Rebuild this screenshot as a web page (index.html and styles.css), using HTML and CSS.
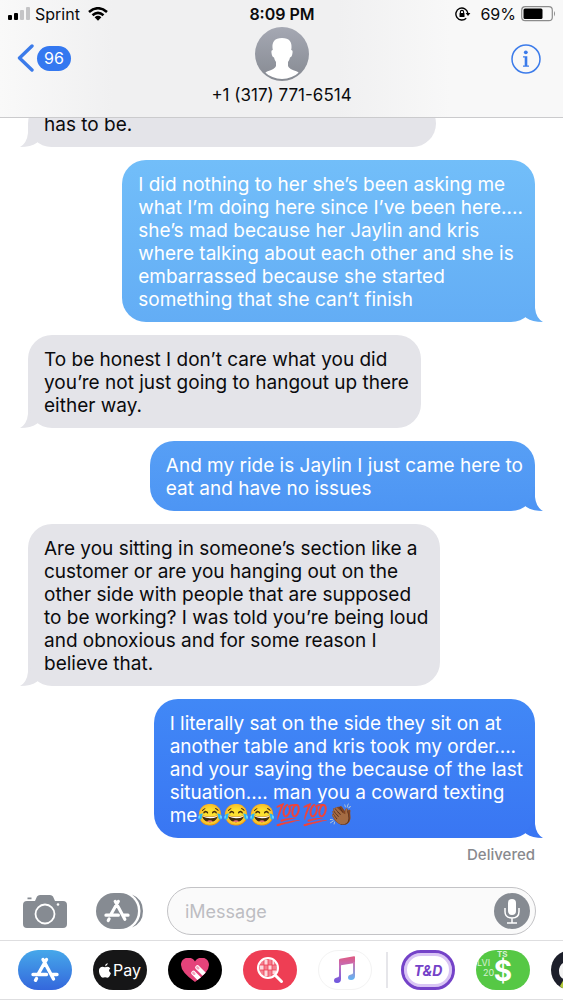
FILE: index.html
```html
<!DOCTYPE html>
<html lang="en">
<head>
    <meta charset="UTF-8">
    <meta name="viewport" content="width=device-width, initial-scale=1.0">
    <title>Messages</title>
    <link rel="stylesheet" href="styles.css">
</head>
<body>
    <!-- Shared shapes -->
    <svg class="defs" width="0" height="0" aria-hidden="true">
        <symbol id="tail" viewBox="0 0 32 24">
            <path d="M24 0V10Q25 20 32 24Q21 24 15.500 20L13.500 18.500A24 24 0 0 0 23 0Z"/>
        </symbol>
        <symbol id="appstore" viewBox="0 0 28 26">
            <g fill="none" stroke="currentColor" stroke-width="3.400" stroke-linecap="round">
                <path d="M15.500 2.500L7.500 16.500M12 2.500L22.500 22M2 17.500H15.500M21 17.500H26M5.500 21.500L4.500 23.300"/>
            </g>
        </symbol>
    </svg>

    <header class="header">
        <div class="status">
            <div class="status-left">
                <svg width="22" height="14" viewBox="0 0 22 14">
                    <rect x="0" y="8" width="4" height="5" rx="1"/>
                    <rect x="6" y="6" width="4" height="7" rx="1"/>
                    <rect x="12" y="3" width="4" height="10" rx="1" fill="#c4c4c6"/>
                    <rect x="18" y="0" width="4" height="13" rx="1" fill="#c4c4c6"/>
                </svg>
                <span>Sprint</span>
                <svg class="wifi" width="20" height="14" viewBox="0 0 20 14">
                    <g fill="none" stroke="#000" stroke-width="2.600">
                        <path d="M1 5Q10 -2.500 19 5"/>
                        <path d="M4.500 8.300Q10 3.600 15.500 8.300"/>
                    </g>
                    <path d="M6.600 10.200Q10 7.400 13.400 10.200L10 13.800Z"/>
                </svg>
            </div>
            <div class="status-time">8:09 PM</div>
            <div class="status-right">
                <svg class="lock" width="16" height="14" viewBox="0 0 16 14">
                    <path d="M12.800 6A6 6 0 1 0 11.200 11.200" fill="none" stroke="#000" stroke-width="1.400"/>
                    <path d="M10.600 6H15.400L13 9Z"/>
                    <rect x="4.500" y="6" width="5" height="4" rx=".5"/>
                    <path d="M5.400 6V5a1.600 1.600 0 0 1 3.200 0V6" fill="none" stroke="#000" stroke-width="1.100"/>
                </svg>
                <span>69%</span>
                <svg width="35" height="16" viewBox="0 0 35 16">
                    <rect x=".7" y=".7" width="30.600" height="14" rx="3.500" fill="none" stroke="#8c8c8c" stroke-width="1.200"/>
                    <rect x="2.500" y="2.500" width="19" height="10.500" rx="1.500"/>
                    <path d="M33 5Q35 7.700 33 10.400Z" fill="#8c8c8c"/>
                </svg>
            </div>
        </div>
        <div class="nav">
            <a class="back" href="#" aria-label="Back, 96 unread">
                <svg width="17" height="28" viewBox="0 0 17 28">
                    <path d="M15 2L2.500 14L15 26" fill="none" stroke="#3b7bea" stroke-width="3.400" stroke-linecap="round" stroke-linejoin="round"/>
                </svg>
                <span class="badge">96</span>
            </a>
            <div class="contact">
                <svg width="54" height="54" viewBox="0 0 54 54">
                    <defs>
                        <linearGradient id="avatar" x2="0" y2="1">
                            <stop offset="0" stop-color="#a5a8b3"/>
                            <stop offset="1" stop-color="#868a92"/>
                        </linearGradient>
                        <clipPath id="face"><circle cx="27" cy="27" r="25"/></clipPath>
                    </defs>
                    <circle cx="27" cy="27" r="27" fill="url(#avatar)"/>
                    <path clip-path="url(#face)" fill="#fff" d="M27 11C19.500 11 17 15 17.500 21L17.800 23Q16 23 16.500 26Q17 30 19 30.500Q19.500 33 21 35V39Q20 42 12 44.500Q9 46 7 52H47Q45 46 42 44.500Q34 42 33 39V35Q34.500 33 35 30.500Q37 30 37.500 26Q38 23 36.200 23L36.500 21C37 15 34.500 11 27 11Z"/>
                </svg>
                <span>+1 (317) 771-6514</span>
            </div>
            <button class="info" type="button" aria-label="Details">
                <svg width="30" height="30" viewBox="0 0 30 30">
                    <circle cx="15" cy="15" r="14" fill="none" stroke="#3b7bea" stroke-width="1.500"/>
                    <circle cx="14.800" cy="8.300" r="1.900" fill="#3b7bea"/>
                    <path d="M12 12.300H16.300V21.500H18V22.700H12V21.500H13.700V13.500H12Z" fill="#3b7bea"/>
                </svg>
            </button>
        </div>
    </header>

    <main class="chat">
        <div class="bubble received cut">has to be.<svg class="tail"><use href="#tail"/></svg></div>
        <div class="bubble sent blue-1">I did nothing to her she’s been asking me<br>what I’m doing here since I’ve been here....<br>she’s mad because her Jaylin and kris<br>where talking about each other and she is<br>embarrassed because she started<br>something that she can’t finish<svg class="tail"><use href="#tail"/></svg></div>
        <div class="bubble received">To be honest I don’t care what you did<br>you’re not just going to hangout up there<br>either way.<svg class="tail"><use href="#tail"/></svg></div>
        <div class="bubble sent blue-2">And my ride is Jaylin I just came here to<br>eat and have no issues<svg class="tail"><use href="#tail"/></svg></div>
        <div class="bubble received">Are you sitting in someone’s section like a<br>customer or are you hanging out on the<br>other side with people that are supposed<br>to be working? I was told you’re being loud<br>and obnoxious and for some reason I<br>believe that.<svg class="tail"><use href="#tail"/></svg></div>
        <div class="bubble sent blue-3">I literally sat on the side they sit on at<br>another table and kris took my order....<br>and your saying the because of the last<br>situation.... man you a coward texting<br>me<span class="emoji">😂😂😂💯💯👏🏾</span><svg class="tail"><use href="#tail"/></svg></div>
        <div class="delivered">Delivered</div>
    </main>

    <form class="compose" onsubmit="return false;">
        <button type="button" aria-label="Camera">
            <svg width="44" height="34" viewBox="0 0 44 34">
                <path fill="#868b92" d="M4 7H12L14 2.500Q15 1 17 1H27Q29 1 30 2.500L32 7H40Q44 7 44 11V30Q44 34 40 34H4Q0 34 0 30V11Q0 7 4 7ZM4.500 3.500H8.500V5.300H4.500Z"/>
                <circle cx="22" cy="20" r="9.500" fill="none" stroke="#fff" stroke-width="1.800"/>
                <circle cx="35" cy="10.500" r="1.300" fill="#fff"/>
            </svg>
        </button>
        <button class="apps-toggle" type="button" aria-label="Apps">
            <svg width="48" height="36" viewBox="0 0 48 36">
                <path d="M36 1.500Q47 6 47 18T36 34.500Q44.500 28 44.500 18T36 1.500Z" fill="#868b92"/>
                <rect width="42" height="36" rx="18" fill="#868b92"/>
                <use href="#appstore" x="8" y="6" width="26" height="24" color="#fff"/>
            </svg>
        </button>
        <div class="field">
            <input type="text" placeholder="iMessage" aria-label="iMessage">
            <button type="button" aria-label="Record audio">
                <svg width="36" height="36" viewBox="0 0 36 36">
                    <circle cx="18" cy="18" r="18" fill="#868b92"/>
                    <rect x="14" y="6" width="8" height="16" rx="4" fill="#fff"/>
                    <path d="M11 15V18.500Q11 25 18 25T25 18.500V15M18 25V30M13 30H23" fill="none" stroke="#fff" stroke-width="1.500"/>
                </svg>
            </button>
        </div>
    </form>

    <nav class="drawer">
        <button class="app store" type="button" aria-label="App Store">
            <svg width="28" height="26"><use href="#appstore"/></svg>
        </button>
        <button class="app pay" type="button">
            <svg width="12" height="15" viewBox="0 0 12 15">
                <path fill="#fff" d="M8.700 0Q8.800 2.800 6 3.500Q6 .800 8.700 0ZM6 4.300Q9 3 11.300 5.200Q8.500 7.700 11.900 10.200Q9.900 15.600 7.500 14.600Q6 14 4.700 14.600Q2.500 15.500.7 11.500Q-1.400 5.600 2.200 4.100Q3.800 3.500 6 4.300Z"/>
            </svg>
            Pay
        </button>
        <button class="app heart" type="button" aria-label="Digital Touch">
            <svg width="28" height="24" viewBox="0 0 28 24">
                <clipPath id="heart"><path d="M14 24Q0 14 0 7C0 -1.500 11 -2.500 14 3.500C17 -2.500 28 -1.500 28 7Q28 14 14 24Z"/></clipPath>
                <g clip-path="url(#heart)">
                    <rect width="28" height="24" fill="#e5437a"/>
                    <path d="M16.500 9.500L26 19M12.500 15L22 24.500" stroke="#fff" stroke-width="4.500" stroke-linecap="round"/>
                    <path d="M16.300 9.300L17.300 10.300M12.300 14.800L13.300 15.800" stroke="#f3a3bd" stroke-width="2.400" stroke-linecap="round"/>
                </g>
            </svg>
        </button>
        <button class="app images" type="button" aria-label="#images">
            <svg width="28" height="28" viewBox="0 0 28 28">
                <circle cx="12" cy="12" r="10" fill="#f37f8e"/>
                <path d="M8 4H12V9H8ZM4 9H8V14H4ZM12 9H16V14H12ZM8 14H12V20H8ZM16 14H20V18H16ZM16 5H18V9H16Z" fill="#fff" opacity=".7"/>
                <path d="M8 3V21M12 2V22M16 3V21M2 9H22M2 14H22" stroke="#ee3e54" stroke-width=".8"/>
                <circle cx="12" cy="12" r="10" fill="none" stroke="#fff" stroke-width="2"/>
                <path d="M19.500 19.500L25.500 25.500" stroke="#fff" stroke-width="3" stroke-linecap="round"/>
            </svg>
        </button>
        <button class="app music" type="button" aria-label="Music">
            <svg width="24" height="28" viewBox="0 0 24 28">
                <defs>
                    <linearGradient id="note" x1="0" y1="0" x2="0" y2="1">
                        <stop offset="0" stop-color="#e0587e"/>
                        <stop offset=".4" stop-color="#c070c0"/>
                        <stop offset="1" stop-color="#6a55e0"/>
                    </linearGradient>
                    <linearGradient id="note2" x1="0" y1="0" x2="0" y2="1">
                        <stop offset="0" stop-color="#d472ae"/>
                        <stop offset="1" stop-color="#5fb4f5"/>
                    </linearGradient>
                </defs>
                <path fill="url(#note)" d="M6 4Q6 3 7 2.800L21 .2Q22 0 22 1V7L8 9.200V23Q8 27 4 27Q1 27 1 24.500Q1 22 4 21.500Q6 21.200 6 20Z"/>
                <path fill="url(#note2)" d="M20 6H22V20Q22 24 18 24Q15 24 15 21.500Q15 19 18 18.500Q20 18.200 20 17Z"/>
            </svg>
        </button>
        <span class="divider"></span>
        <button class="app td" type="button">T&amp;D</button>
        <button class="app cash" type="button">
            <span class="mark">
                <b>TS</b>
                <span>LVI</span>
                <span class="year">20</span>
            </span>
            $
        </button>
        <button class="app game" type="button" aria-label="Game">
            <svg width="54" height="40" viewBox="0 0 54 40">
                <path d="M20 10Q8 12 8 21T18 30V40H40V10Z" fill="#f4f4f4"/>
                <path d="M9 36L13 29L24 40H12Z" fill="#b4cc3a"/>
            </svg>
        </button>
    </nav>
</body>
</html>
```
FILE: styles.css
```css
* {
    box-sizing: border-box;
}
body {
    margin: 0;
    min-height: 100vh;
    display: flex;
    flex-direction: column;
    background-color: #fff;
    color: #0b0b0d;
    font-family: Inter, "Liberation Sans", sans-serif;
    overflow-x: hidden;
}
button {
    border: none;
    background: none;
    padding: 0;
    font-family: inherit;
    cursor: pointer;
}
svg {
    display: block;
    flex-shrink: 0;
}
.defs {
    position: absolute;
}

.header {
    position: relative;
    z-index: 1;
    height: 118px;
    border-bottom: 1px solid #cbcbcd;
    background: linear-gradient(to right, #f9f9f9, #f0f0f1 20%, #f0f0f1 60%, #f8f8f8 80%);
}
.status {
    display: grid;
    grid-template-columns: 1fr auto 1fr;
    align-items: center;
    height: 27px;
    padding: 0 7px 0 8px;
    font-size: 16px;
}
.status-left,
.status-right {
    display: flex;
    align-items: center;
    gap: 5px;
}
.status-right {
    justify-content: flex-end;
}
.wifi {
    margin-left: 3px;
}
.lock {
    margin-right: 4px;
}
.status-time {
    font-weight: 600;
}
.nav {
    display: grid;
    grid-template-columns: 1fr auto 1fr;
    align-items: start;
    padding: 0 17px;
}
.back {
    display: flex;
    align-items: center;
    gap: 3px;
    padding-top: 17px;
    text-decoration: none;
}
.badge {
    padding: 0 7px;
    border-radius: 13px;
    background-color: #3478f0;
    color: #fff;
    font-size: 16px;
    line-height: 25px;
}
.contact {
    display: flex;
    flex-direction: column;
    align-items: center;
    font-size: 17px;
    line-height: 28px;
}
.info {
    justify-self: end;
    margin-right: 5px;
    padding-top: 17px;
}

/* Messages */
.chat {
    flex: 1;
    display: flex;
    flex-direction: column;
    align-items: flex-start;
    gap: 13px;
    padding: 0 28px;
}
.bubble {
    position: relative;
    padding: 13px 12px 11px 16px;
    border-radius: 24px;
    font-size: 19px;
    line-height: 23px;
    white-space: nowrap;
}
.received {
    background-color: #e4e4e9;
    fill: #e4e4e9;
}
.sent {
    align-self: flex-end;
    color: #fff;
}
.cut {
    width: 408px;
    margin-top: -18px;
}
.blue-1 {
    background: linear-gradient(#72bef9, #63adf5);
    fill: #63adf5;
}
.blue-2 {
    background: linear-gradient(#579ff5, #4d95f4);
    fill: #4d95f4;
}
.blue-3 {
    background: linear-gradient(#4188f6, #3976f3);
    fill: #3976f3;
}
.tail {
    position: absolute;
    right: -8px;
    bottom: 0;
    width: 32px;
    height: 24px;
}
.received .tail {
    right: auto;
    left: -8px;
    transform: scaleX(-1);
}
.emoji {
    font-family: "Noto Color Emoji", sans-serif;
    font-size: 21px;
    line-height: 20px;
}
.delivered {
    align-self: flex-end;
    margin-top: -6px;
    color: #88898e;
    font-size: 15px;
    font-weight: 500;
    line-height: 20px;
}

/* Message box */
.compose {
    display: flex;
    align-items: center;
    gap: 29px;
    padding: 0 27px 5px 23px;
}
.field {
    flex: 1;
    display: flex;
    align-items: center;
    height: 48px;
    margin-left: -6px;
    padding: 0 5px 0 17px;
    border: 1px solid #c3c3c6;
    border-radius: 24px;
    background-color: #fafafa;
}
.field input {
    flex: 1;
    min-width: 0;
    padding: 0;
    border: none;
    outline: none;
    background: none;
    font-family: inherit;
    font-size: 18px;
}
.field input::placeholder {
    color: #bdbdc2;
}

/* App drawer */
.drawer {
    display: flex;
    align-items: center;
    gap: 21px;
    height: 60px;
    padding-left: 18px;
    border-top: 1px solid #dedee0;
    border-bottom: 1px solid #dedee0;
    overflow: hidden;
}
.app {
    display: flex;
    flex-shrink: 0;
    align-items: center;
    justify-content: center;
    width: 54px;
    height: 40px;
    border-radius: 20px;
    overflow: hidden;
}
.store {
    background: linear-gradient(#46a8ea, #3467dc);
    color: #fff;
}
.pay {
    gap: 2px;
    background-color: #161617;
    color: #fff;
    font-size: 16px;
}
.heart {
    background-color: #000;
}
.images {
    background-color: #ee3e54;
}
.music {
    border: 1px solid #f3f3f3;
}
.divider {
    flex-shrink: 0;
    width: 2px;
    height: 36px;
    margin: 0 -8px 0 -7px;
    background-color: #e6e6ea;
}
.td {
    border: 3px solid #7442c8;
    box-shadow: inset 0 0 0 3px #d9c5f5;
    color: #7442c8;
    font-size: 14px;
    font-style: italic;
    font-weight: 700;
}
.cash {
    position: relative;
    padding-top: 2px;
    background-color: #56c845;
    color: #fff;
    font-size: 28px;
    font-weight: 700;
    line-height: 28px;
}
.mark {
    position: absolute;
    top: 0;
    left: 1px;
    display: flex;
    flex-direction: column;
    font-size: 9px;
    font-weight: 400;
    line-height: 10px;
    text-align: left;
    opacity: .75;
}
.mark b {
    padding-left: 20px;
    font-size: 8px;
    line-height: 8px;
}
.mark .year {
    padding-left: 6px;
}
.game {
    background-color: #1d1f2b;
}
```
